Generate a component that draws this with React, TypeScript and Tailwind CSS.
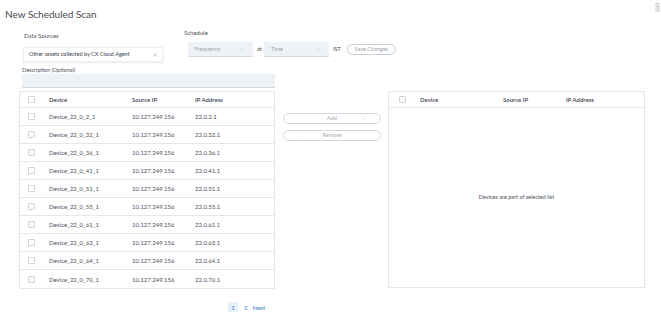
import React from "react";
import { ChevronDown, ChevronLeft, ChevronRight, X } from "lucide-react";

type Row = { device: string; source: string; ip: string };

const rows: Row[] = [
  { device: "Device_22_0_2_1", source: "10.127.249.156", ip: "22.0.2.1" },
  { device: "Device_22_0_32_1", source: "10.127.249.156", ip: "22.0.32.1" },
  { device: "Device_22_0_36_1", source: "10.127.249.156", ip: "22.0.36.1" },
  { device: "Device_22_0_41_1", source: "10.127.249.156", ip: "22.0.41.1" },
  { device: "Device_22_0_51_1", source: "10.127.249.156", ip: "22.0.51.1" },
  { device: "Device_22_0_55_1", source: "10.127.249.156", ip: "22.0.55.1" },
  { device: "Device_22_0_61_1", source: "10.127.249.156", ip: "22.0.61.1" },
  { device: "Device_22_0_63_1", source: "10.127.249.156", ip: "22.0.63.1" },
  { device: "Device_22_0_64_1", source: "10.127.249.156", ip: "22.0.64.1" },
  { device: "Device_22_0_70_1", source: "10.127.249.156", ip: "22.0.70.1" },
];

const Check = () => (
  <span className="block w-[7px] h-[7px] border border-[#cfd4da] rounded-[1px] bg-white" />
);

const TableHead = ({ pl }: { pl: string }) => (
  <div className={`grid grid-cols-[29px_83px_63px_1fr] items-center h-[16px] border-b border-[#e3e6ea] text-[6px] font-semibold text-[#39424e] ${pl}`}>
    <div className="pl-[8px]">
      <Check />
    </div>
    <div>Device</div>
    <div>Source IP</div>
    <div>IP Address</div>
  </div>
);

const Select = ({ label, w }: { label: string; w: string }) => (
  <div className={`flex items-center justify-between h-[15px] ${w} bg-[#eef1f5] border-b border-[#d5dae0] px-[7px] text-[5.5px] text-[#9aa3ad]`}>
    <span>{label}</span>
    <ChevronDown size={7} strokeWidth={1.2} className="text-[#9aa3ad]" />
  </div>
);

export default function App() {
  return (
    <div className="relative w-[661px] h-[334px] bg-white overflow-hidden font-['Lato',sans-serif] text-[#39424e]">
      {/* corner icon */}
      <svg className="absolute left-[655px] top-[3px]" width="5" height="9" viewBox="0 0 5 9">
        <rect x="1" y="0.5" width="3" height="3" fill="none" stroke="#b5bcc4" strokeWidth="0.8" />
        <rect x="1" y="5" width="3" height="3" fill="none" stroke="#b5bcc4" strokeWidth="0.8" />
      </svg>

      <div className="pl-[5px] pt-[8px] text-[10px] leading-[13px] text-[#3f4750]">New Scheduled Scan</div>

      {/* top form */}
      <div className="flex items-start mt-[8px]">
        <div className="ml-[23px] w-[140px] pt-[3px]">
          <div className="pl-[1px] text-[6px] leading-[8px] text-[#4a525c]">Data Sources</div>
          <div className="mt-[7px] h-[15px] flex items-center justify-between pl-[5px] pr-[4px] bg-white border border-[#eceef1] shadow-[0_1px_2px_rgba(0,0,0,0.08)] text-[5.5px] text-[#39424e]">
            <span>Other assets collected by CX Cloud Agent</span>
            <X size={6} strokeWidth={1.4} className="text-[#6b737c]" />
          </div>
        </div>
        <div className="ml-[21px]">
          <div className="text-[6px] leading-[8px] text-[#4a525c]">Schedule</div>
          <div className="mt-[5px] pl-[4px] flex items-center">
            <Select label="Frequency" w="w-[65px]" />
            <span className="ml-[4px] w-[7px] text-[5.5px] text-[#39424e]">at</span>
            <Select label="Time" w="w-[65px]" />
            <span className="ml-[4px] text-[5.5px] text-[#39424e]">IST</span>
            <span className="ml-[6px] h-[11px] w-[49px] flex items-center justify-center rounded-full border border-[#c9ced4] text-[5.5px] text-[#9aa3ad]">
              Save Changes
            </span>
          </div>
        </div>
      </div>

      <div className="ml-[22px] mt-[4px] w-[253px]">
        <div className="text-[5.5px] leading-[8px] text-[#4a525c]">Description (Optional)</div>
        <div className="h-[14px] bg-[#eef1f5] border-b border-[#d5dae0]" />
      </div>

      {/* tables */}
      <div className="flex items-start mt-[3px] ml-[19px]">
        <div className="w-[256px] border border-[#e3e6ea]">
          <TableHead pl="" />
          {rows.map((r, i) => (
            <div
              key={r.device}
              className={`grid grid-cols-[29px_83px_63px_1fr] items-center h-[18px] text-[6px] text-[#4a525c] ${i < rows.length - 1 ? "border-b border-[#e3e6ea]" : ""}`}
            >
              <div className="pl-[8px]">
                <Check />
              </div>
              <div>{r.device}</div>
              <div>{r.source}</div>
              <div>{r.ip}</div>
            </div>
          ))}
        </div>

        <div className="w-[113px] pt-[22px] pl-[8px] flex flex-col gap-[6px]">
          <div className="relative w-[98px] h-[11px] rounded-full border border-[#d3d8de] flex items-center justify-center text-[5.5px] text-[#a7aeb6]">
            Add
            <ChevronRight size={6} strokeWidth={1.2} className="absolute right-[14px] text-[#a7aeb6]" />
          </div>
          <div className="relative w-[98px] h-[11px] rounded-full border border-[#d3d8de] flex items-center justify-center text-[5.5px] text-[#a7aeb6]">
            <ChevronLeft size={6} strokeWidth={1.2} className="absolute left-[14px] text-[#a7aeb6]" />
            Remove
          </div>
        </div>

        <div className="w-[257px] h-[197px] border border-[#e3e6ea] flex flex-col">
          <div className="grid grid-cols-[29px_83px_63px_1fr] items-center h-[16px] border-b border-[#e3e6ea] text-[6px] font-semibold text-[#39424e] pl-[2px]">
            <div className="pl-[8px]">
              <Check />
            </div>
            <div>Device</div>
            <div>Source IP</div>
            <div>IP Address</div>
          </div>
          <div className="flex-1 flex items-center justify-center text-[5.5px] text-[#4a525c]">
            Devices are part of selected list
          </div>
        </div>
      </div>

      {/* pagination */}
      <div className="flex items-center ml-[228px] mt-[13px] text-[6px]">
        <span className="w-[10px] h-[10px] flex items-center justify-center bg-[#e6f0fa] text-[#3b7fc4]">1</span>
        <span className="ml-[6px] text-[#3b7fc4]">2</span>
        <span className="ml-[5px] text-[#3b7fc4]">Next</span>
      </div>
    </div>
  );
}
